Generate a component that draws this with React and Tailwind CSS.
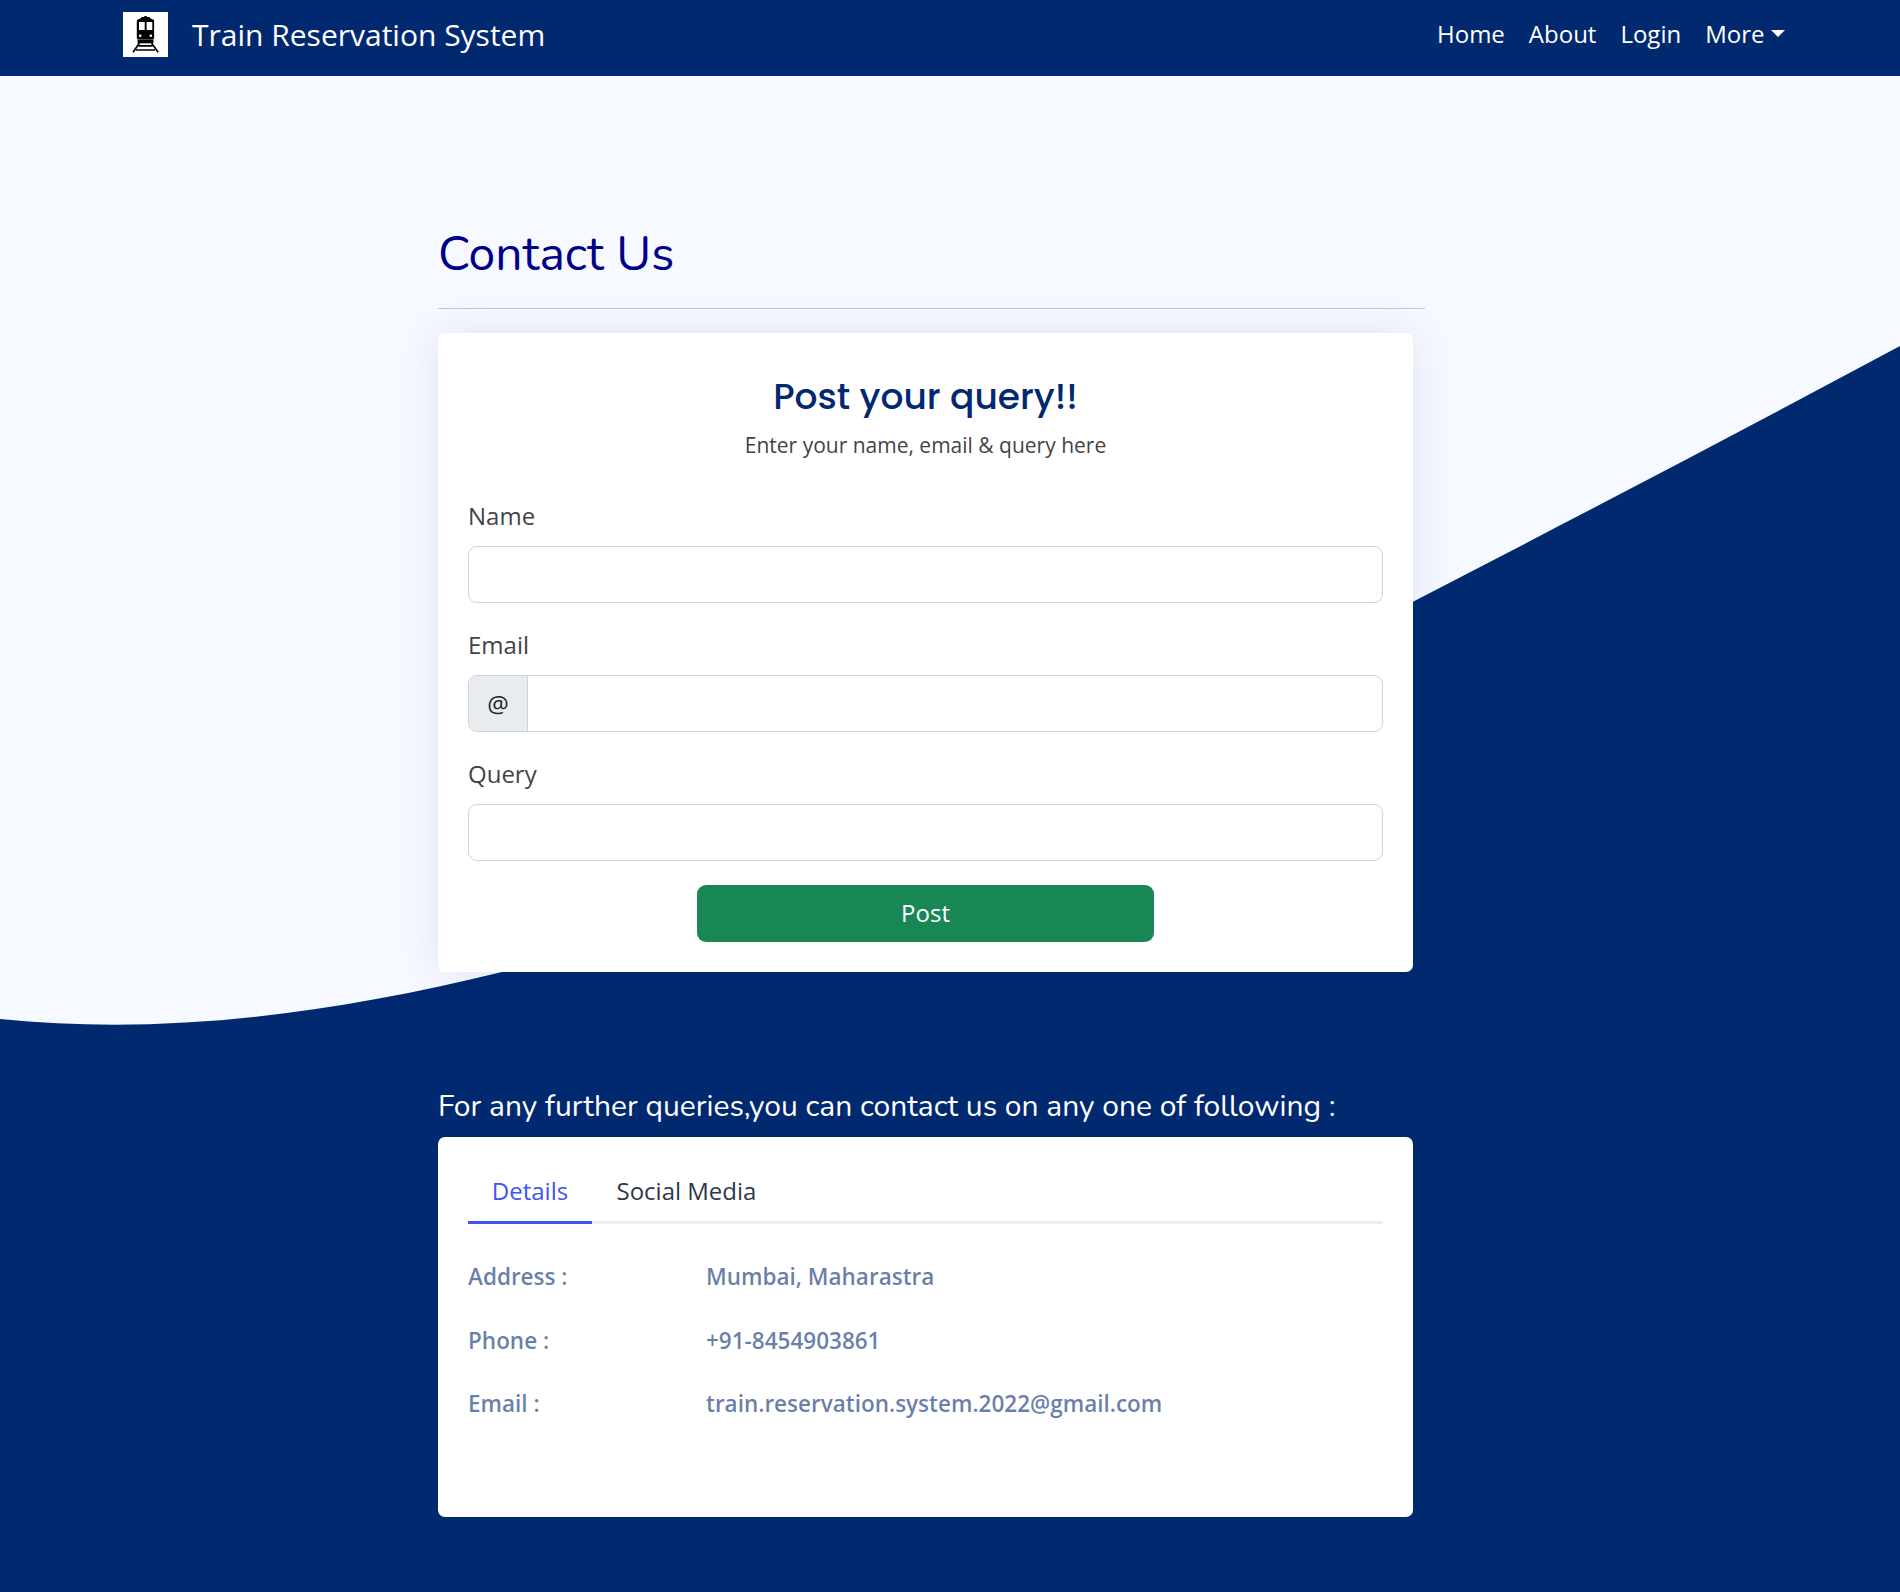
const NAV = ["Home", "About", "Login"];

const DETAILS = [
  ["Address :", "Mumbai, Maharastra"],
  ["Phone :", "+91-8454903861"],
  ["Email :", "train.reservation.system.2022@gmail.com"],
];

function TrainLogo() {
  return (
    <svg viewBox="0 0 45 45" className="block size-[45px] bg-white">
      <path d="M21.300 4h2.400v1h2.500l1.600 1.400 3.200 1.600v1.500H14V8l3.200-1.600L18.800 5h2.500z" />
      <rect x="13.800" y="8" width="17.300" height="18.900" rx="1" />
      <rect x="16" y="10" width="5.700" height="8" fill="#fff" />
      <rect x="23.600" y="10" width="5.700" height="8" fill="#fff" />
      <rect x="16" y="22.600" width="2.300" height="2.200" fill="#fff" />
      <rect x="26.700" y="22.600" width="2.300" height="2.200" fill="#fff" />
      <rect x="14.600" y="27.300" width="15.800" height="4" />
      <path
        d="M16.500 31 10 40.300M28.500 31 35.200 40.300M15.500 33.800h14M13 38h19"
        stroke="#000"
        strokeWidth="1.700"
        fill="none"
      />
    </svg>
  );
}

function Navbar() {
  return (
    <header className="flex h-[76px] items-start justify-between bg-[#012970] pl-[123px] pr-[115px] text-white">
      <a className="flex items-center gap-6 pt-3 text-[30px] leading-[45px]">
        <TrainLogo />
        Train Reservation System
      </a>
      <nav className="flex gap-6 pt-4 text-2xl leading-9">
        {NAV.map((item) => (
          <a key={item}>{item}</a>
        ))}
        <a className="flex items-center">
          More
          <span className="mb-px ml-[6.500px] border-x-[7px] border-t-[7px] border-x-transparent border-t-white" />
        </a>
      </nav>
    </header>
  );
}

function Wave() {
  return (
    <svg
      viewBox="0 0 1900 1516"
      className="absolute inset-x-0 top-0 -z-10 h-[1516px] w-full"
      preserveAspectRatio="none"
    >
      <path
        d="M0 943C167 960 334 937.200 501 896.300C805 821.900 1109 682.900 1413 525.700C1575 442 1738 356.700 1900 270V1516H0Z"
        fill="#012970"
      />
    </svg>
  );
}

function Field({ label, addon }) {
  return (
    <label className="block text-2xl leading-9 text-[#444]">
      {label}
      <span className="mt-3 flex h-[57px] overflow-hidden rounded-[9px] border border-[#ced4da] bg-white">
        {addon && (
          <span className="flex w-[59px] items-center justify-center border-r border-[#ced4da] bg-[#e9ecef] text-[#212529]">
            {addon}
          </span>
        )}
        <input className="min-w-0 flex-1 px-[18px] outline-none" />
      </span>
    </label>
  );
}

export default function App() {
  return (
    <div className="min-h-[1592px] bg-[#f6f9ff] font-['Open_Sans',sans-serif]">
      <Navbar />
      <main className="relative isolate h-[1516px] pl-[438px]">
        <Wave />
        <div className="w-[987px] pt-[149px]">
          <h1 className="font-['Nunito',Lato,sans-serif] text-5xl leading-[58px] font-normal text-[#00008b]">
            Contact Us
          </h1>
          <hr className="mt-[25px] border-[#c5c7cc]" />
        </div>

        <section className="mt-6 h-[639px] w-[975px] rounded-[7px] bg-white px-[30px] shadow-[0_0_45px_rgba(1,41,112,0.1)]">
          <h2 className="pt-[42px] text-center font-['Poppins',Inter,sans-serif] text-4xl leading-[43px] font-medium text-[#012970]">
            Post your query!!
          </h2>
          <p className="mt-[11px] text-center text-[21px] leading-8 text-[#444]">
            Enter your name, email &amp; query here
          </p>
          <div className="mt-[37px] flex flex-col gap-6">
            <Field label="Name" />
            <Field label="Email" addon="@" />
            <Field label="Query" />
            <button className="mx-auto h-[57px] w-[457px] rounded-[9px] bg-[#198754] pb-0.5 text-2xl text-white">
              Post
            </button>
          </div>
        </section>

        <h3 className="mt-[117px] font-['Nunito',Lato,sans-serif] text-[30px] leading-9 font-normal text-white">
          For any further queries,you can contact us on any one of following :
        </h3>
        <section className="mt-3 h-[380px] w-[975px] rounded-[7px] bg-white px-[30px] pt-[30px]">
          <div className="flex border-b-[3px] border-[#ebeef4] text-2xl leading-9">
            <button className="-mb-[3px] h-[57px] w-[124px] border-b-[3px] border-[#4154f1] pb-1.5 text-[#4154f1]">
              Details
            </button>
            <button className="h-[54px] px-[24.5px] pb-1.5 text-[#2c384e]">Social Media</button>
          </div>
          <dl className="mt-[36px] flex flex-col gap-[29.75px] text-[22.5px] leading-[33.75px] font-semibold text-[#012970]/60">
            {DETAILS.map(([term, value]) => (
              <div key={term} className="flex">
                <dt className="w-[238px]">{term}</dt>
                <dd>{value}</dd>
              </div>
            ))}
          </dl>
        </section>
      </main>
    </div>
  );
}
